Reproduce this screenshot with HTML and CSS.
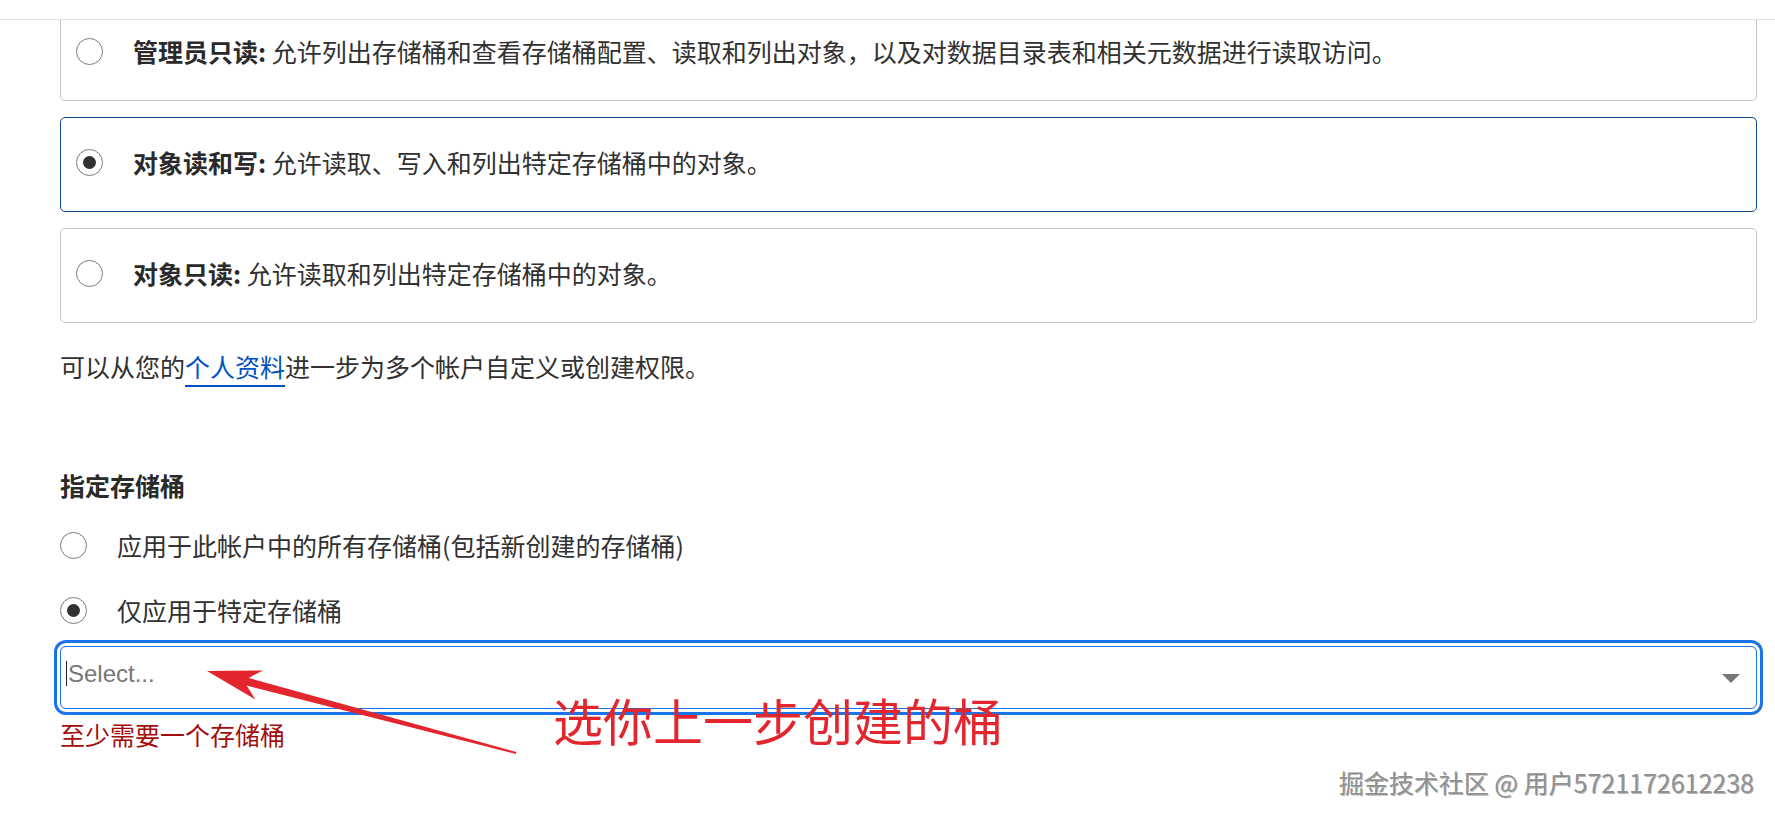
FILE: index.html
```html
<html lang="zh-CN">
<head>
    <meta charset="UTF-8">
    <meta name="viewport" content="width=device-width, initial-scale=1.0">
    <title>创建 API 令牌</title>
    <link rel="stylesheet" href="styles.css">
</head>
<body>
<div class="page">
    <div class="topbar"></div>

    <div class="viewport">
        <div class="content">
            <label class="perm-card">
                <span class="radio"></span>
                <span class="perm-text"><b>管理员只读:</b> 允许列出存储桶和查看存储桶配置、读取和列出对象，以及对数据目录表和相关元数据进行读取访问。</span>
            </label>
            <label class="perm-card selected">
                <span class="radio checked"></span>
                <span class="perm-text"><b>对象读和写:</b> 允许读取、写入和列出特定存储桶中的对象。</span>
            </label>
            <label class="perm-card">
                <span class="radio"></span>
                <span class="perm-text"><b>对象只读:</b> 允许读取和列出特定存储桶中的对象。</span>
            </label>

            <p class="hint">可以从您的<a href="#" class="link">个人资料</a>进一步为多个帐户自定义或创建权限。</p>

            <h3 class="section-title">指定存储桶</h3>

            <label class="bucket-option">
                <span class="radio"></span>
                <span>应用于此帐户中的所有存储桶(包括新创建的存储桶)</span>
            </label>
            <label class="bucket-option last">
                <span class="radio checked"></span>
                <span>仅应用于特定存储桶</span>
            </label>

            <div class="select">
                <span class="caret-line"></span>
                <span class="placeholder">Select...</span>
                <span class="dropdown-arrow"></span>
            </div>
            <p class="error">至少需要一个存储桶</p>
        </div>
    </div>

    <!-- 截图上的标注 -->
    <svg class="arrow" width="335" height="110" viewBox="0 0 335 110">
        <polygon points="12,16 68,15.4 53.6,22.9 321.3,97 320.7,99 51.6,30.6 60.4,44.4" fill="#e3262e"/>
    </svg>
    <div class="note">选你上一步创建的桶</div>

    <div class="watermark">掘金技术社区 @ 用户5721172612238</div>
</div>
</body>
</html>
```

FILE: styles.css
```css
body {
    margin: 0;
    background-color: #fff;
    font-family: "Noto Sans CJK SC", "Noto Sans", sans-serif;
    color: #313131;
    overflow: hidden;
}
.page {
    position: relative;
    width: 1775px;
    height: 820px;
    overflow: hidden;
}
.topbar {
    height: 19px;
    border-bottom: 1px solid #e4e4e4;
    background-color: #fff;
}
.viewport {
    height: 800px;
    overflow: hidden;
}
.content {
    margin-top: -14px;
    padding: 0 18px 0 60px;
}

.perm-card {
    display: flex;
    align-items: center;
    height: 95px;
    box-sizing: border-box;
    padding: 0 15px 5px 15px;
    margin-bottom: 16px;
    border: 1px solid #c4c4c4;
    border-radius: 5px;
    font-size: 25px;
    line-height: 36px;
}
.perm-card.selected {
    border-color: #0b4a8b;
}
.perm-text {
    margin-left: 30px;
}
.perm-text b {
    color: #2a2a2a;
}

.radio {
    display: inline-flex;
    justify-content: center;
    align-items: center;
    flex-shrink: 0;
    width: 27px;
    height: 27px;
    box-sizing: border-box;
    border: 1px solid #7a7a7a;
    border-radius: 50%;
    background-color: #fff;
}
.radio.checked::after {
    content: "";
    width: 13px;
    height: 13px;
    border-radius: 50%;
    background-color: #313131;
}

.hint {
    margin: 25px 0 0 0;
    font-size: 25px;
    line-height: 36px;
}
.link {
    color: #0051c3;
    text-decoration: none;
    border-bottom: 2px solid #0051c3;
    padding-bottom: 1px;
}

.section-title {
    margin: 83px 0 0 0;
    font-size: 25px;
    line-height: 36px;
    font-weight: bold;
    color: #2a2a2a;
}

.bucket-option {
    display: flex;
    align-items: center;
    gap: 30px;
    margin-top: 24px;
    font-size: 25px;
    line-height: 36px;
}
.bucket-option.last {
    margin-top: 29px;
}

.select {
    display: flex;
    align-items: center;
    height: 63px;
    box-sizing: border-box;
    margin-top: 18px;
    padding: 0 16px 8px 5px;
    border: 1px solid #1a73e8;
    border-radius: 6px;
    box-shadow: 0 0 0 3px #fff, 0 0 0 6px #1a73e8;
}
.caret-line {
    width: 1px;
    height: 25px;
    background-color: #222;
}
.placeholder {
    flex: 1;
    margin-left: 1px;
    font-family: "Liberation Sans", Arial, sans-serif;
    font-size: 24px;
    color: #777;
}
.dropdown-arrow {
    width: 0;
    height: 0;
    border-left: 9px solid transparent;
    border-right: 9px solid transparent;
    border-top: 9px solid #777;
    margin-top: 10px;
}

.error {
    margin: 7px 0 0 0;
    font-size: 25px;
    line-height: 36px;
    color: #a30d0d;
}

.arrow {
    position: absolute;
    left: 195px;
    top: 655px;
}
.note {
    position: absolute;
    left: 553px;
    top: 692px;
    font-size: 50px;
    line-height: 54px;
    color: #e3262e;
}
.watermark {
    position: absolute;
    right: 21px;
    top: 764px;
    font-size: 25px;
    line-height: 36px;
    color: #909090;
    text-shadow: -1px -1px 0 #fff, 1px 1px 0 rgba(0, 0, 0, 0.3);
}
```
